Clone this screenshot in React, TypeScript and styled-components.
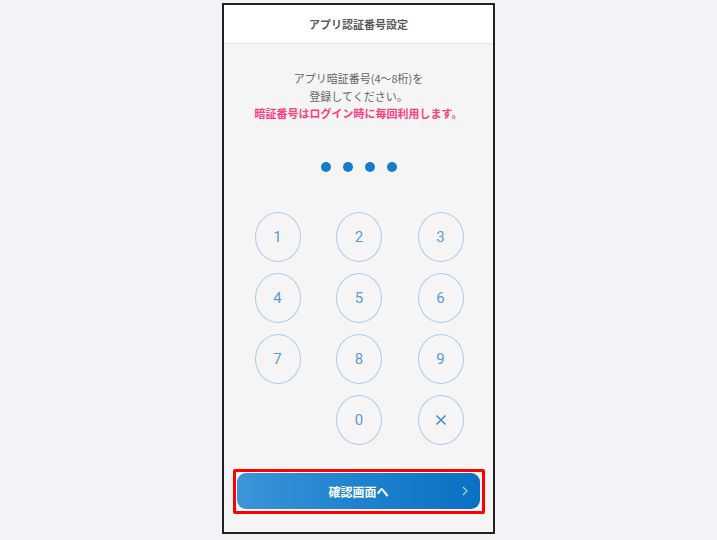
import React from "react";
import styled, { createGlobalStyle } from "styled-components";

const Global = createGlobalStyle`
  html, body { margin: 0; padding: 0; }
  body {
    background: #f2f3f7;
    font-family: "Noto Sans CJK JP", "Noto Sans", sans-serif;
  }
`;

const Page = styled.div`
  width: 717px;
  height: 540px;
  display: flex;
  justify-content: center;
  padding-top: 3px;
  box-sizing: border-box;
`;

const Phone = styled.div`
  width: 273px;
  height: 531px;
  box-sizing: border-box;
  border: 2.5px solid #222;
  background: #f5f5f5;
  display: flex;
  flex-direction: column;
`;

const Header = styled.div`
  height: 38px;
  flex: none;
  background: #fff;
  border-bottom: 1px solid #e4e4e4;
  display: flex;
  align-items: center;
  justify-content: center;
  font-size: 11px;
  font-weight: 700;
  color: #5a5a5a;
`;

const Body = styled.div`
  flex: 1;
  display: flex;
  flex-direction: column;
  align-items: center;
  padding-top: 26px;
`;

const Message = styled.div`
  text-align: center;
  font-size: 11px;
  line-height: 17.5px;
  color: #666;
`;

const Warn = styled.div`
  color: #ff3f7e;
  font-weight: 700;
`;

const Dots = styled.div`
  display: flex;
  gap: 12px;
  margin-top: 39px;
`;

const Dot = styled.span`
  width: 10px;
  height: 10px;
  border-radius: 50%;
  background: #157ccc;
`;

const Pad = styled.div`
  display: grid;
  grid-template-columns: repeat(3, 46px);
  grid-auto-rows: 50px;
  column-gap: 35.5px;
  row-gap: 11px;
  margin-top: 40px;
  margin-left: 1px;
`;

const Key = styled.div<{ $empty?: boolean }>`
  box-sizing: border-box;
  border: ${(p) => (p.$empty ? "none" : "1.6px solid #a9cbea")};
  border-radius: 50%;
  display: flex;
  align-items: center;
  justify-content: center;
  font-family: Roboto, "Noto Sans", sans-serif;
  font-size: 15px;
  color: #5d9bd6;
`;

const Highlight = styled.div`
  margin-top: 24px;
  width: 252px;
  height: 45px;
  box-sizing: border-box;
  border: 3.5px solid #ff0000;
  border-radius: 2px;
  padding: 1.5px;
  display: flex;
`;

const Button = styled.div`
  flex: 1;
  border-radius: 9px;
  background: linear-gradient(90deg, #3b95d8 0%, #1e82cf 50%, #0a70c2 100%);
  display: flex;
  align-items: center;
  justify-content: center;
  position: relative;
  color: #fff;
  font-size: 12px;
  font-weight: 700;
`;

const Chevron = styled.svg`
  position: absolute;
  right: 12px;
  top: 50%;
  transform: translateY(-50%);
`;

export default function App() {
  const keys = ["1", "2", "3", "4", "5", "6", "7", "8", "9", "", "0", "x"];
  return (
    <>
      <Global />
      <Page>
        <Phone>
          <Header>アプリ認証番号設定</Header>
          <Body>
            <Message>
              <div>アプリ暗証番号(4〜8桁)を</div>
              <div>登録してください。</div>
              <Warn>暗証番号はログイン時に毎回利用します。</Warn>
            </Message>
            <Dots>
              <Dot />
              <Dot />
              <Dot />
              <Dot />
            </Dots>
            <Pad>
              {keys.map((k, i) =>
                k === "" ? (
                  <Key key={i} $empty />
                ) : k === "x" ? (
                  <Key key={i}>
                    <svg width="12" height="12" viewBox="0 0 12 12">
                      <path d="M1.5 1.5 L10.5 10.5 M10.5 1.5 L1.5 10.5" stroke="#3f8fd6" strokeWidth="1.6" />
                    </svg>
                  </Key>
                ) : (
                  <Key key={i}>{k}</Key>
                )
              )}
            </Pad>
            <Highlight>
              <Button>
                確認画面へ
                <Chevron width="6" height="10" viewBox="0 0 6 10">
                  <path d="M1 1 L5 5 L1 9" fill="none" stroke="#b9d6f0" strokeWidth="1.1" />
                </Chevron>
              </Button>
            </Highlight>
          </Body>
        </Phone>
      </Page>
    </>
  );
}
